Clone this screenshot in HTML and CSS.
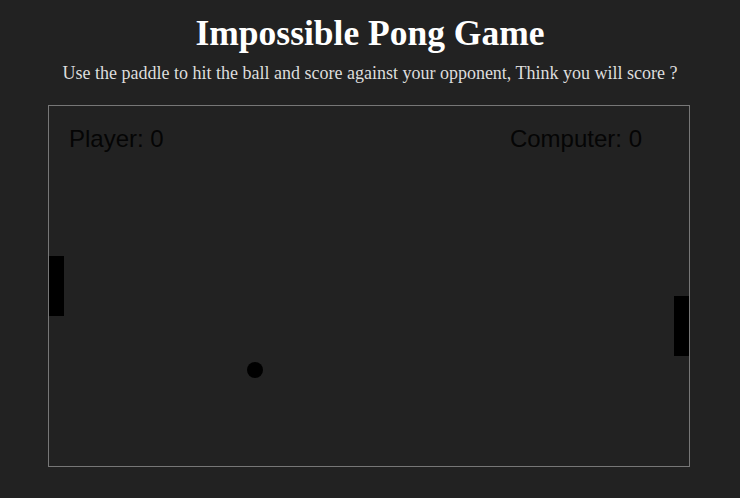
FILE: index.html
```html
<!DOCTYPE html>
<html>
<head>
<meta charset="utf-8">
<title>Impossible Pong Game</title>
<link rel="stylesheet" href="styles.css">
</head>
<body>
  <header class="intro">
    <h1 class="title">Impossible Pong Game</h1>
    <p class="subtitle">Use the paddle to hit the ball and score against your opponent, Think you will score ?</p>
  </header>
  <div class="board">
    <div class="scores">
      <span class="score">Player: 0</span>
      <span class="score">Computer: 0</span>
    </div>
    <div class="paddle paddle-left"></div>
    <div class="paddle paddle-right"></div>
    <div class="ball"></div>
  </div>
</body>
</html>
```

FILE: styles.css
```css
html, body {
  margin: 0;
  padding: 0;
  background: #222222;
}

body {
  font-family: "Liberation Serif", "Times New Roman", serif;
  color: #ffffff;
}

.intro {
  text-align: center;
  padding-top: 13px;
}

.title {
  margin: 0;
  font-size: 35.5px;
  font-weight: bold;
  line-height: 41px;
  color: #ffffff;
}

.subtitle {
  margin: 9px 0 0;
  font-size: 18px;
  line-height: 21px;
  color: #dddddd;
}

.board {
  position: relative;
  box-sizing: content-box;
  width: 640px;
  height: 360px;
  margin: 21px 0 0 48px;
  border: 1px solid #777777;
  background: #222222;
}

.scores {
  display: flex;
  justify-content: space-between;
  padding: 21px 47px 0 20px;
  font-family: "Liberation Sans", Arial, sans-serif;
  font-size: 24px;
  line-height: 24px;
  color: #050505;
}

.paddle {
  position: absolute;
  width: 15px;
  height: 60px;
  background: #000000;
}

.paddle-left {
  left: 0;
  top: 150px;
}

.paddle-right {
  left: 625px;
  top: 190px;
}

.ball {
  position: absolute;
  left: 198px;
  top: 256px;
  width: 16px;
  height: 16px;
  border-radius: 50%;
  background: #000000;
}
```
